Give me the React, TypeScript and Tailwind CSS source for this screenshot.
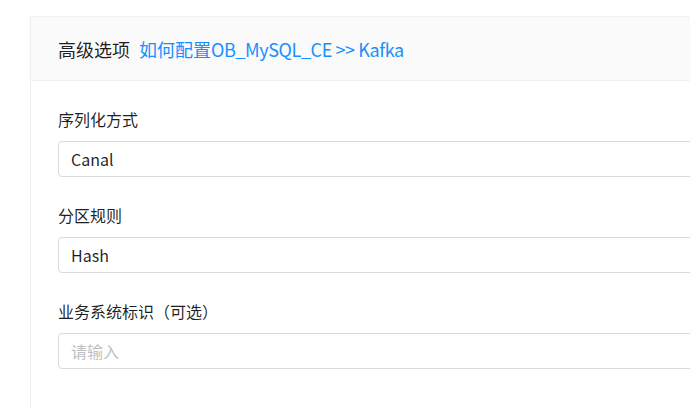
const fields = [
  { label: "序列化方式", value: "Canal" },
  { label: "分区规则", value: "Hash" },
  { label: "业务系统标识（可选）", value: "" },
];

const App = () => {
  return (
    <div
      className="h-[408px] w-[690px] overflow-hidden bg-white pt-4 pl-[30px]"
      style={{ fontFamily: '"Noto Sans CJK SC", "Noto Sans", sans-serif' }}
    >
      <div id="advanced-card" className="w-[900px] border border-[#f0f0f0] bg-white">
        <div className="flex h-[64px] items-center border-b border-[#f0f0f0] bg-[#fafafa] px-[27px]">
          <span className="text-[18px] leading-6 text-[rgba(0,0,0,0.88)]">高级选项</span>
          <a className="ml-[9px] text-[18px] leading-6 text-[#1890ff]">
            如何配置<span className="tracking-[-0.4px]">OB_MySQL_CE &gt;&gt; Kafka</span>
          </a>
        </div>
        <div className="flex flex-col px-[27px] pt-[26px] pb-10">
          {fields.map((f) => (
            <div key={f.label} className="mb-[26px] flex flex-col">
              <label className="mb-[10px] text-[16px] leading-6 text-[rgba(0,0,0,0.88)]">{f.label}</label>
              <div className="flex h-[36px] items-center rounded border border-[#d9d9d9] bg-white px-3">
                {f.value ? (
                  <span className="text-[16px] text-[rgba(0,0,0,0.88)]">{f.value}</span>
                ) : (
                  <span className="text-[16px] text-[#bfbfbf]">请输入</span>
                )}
              </div>
            </div>
          ))}
        </div>
      </div>
    </div>
  );
};

export default App;
